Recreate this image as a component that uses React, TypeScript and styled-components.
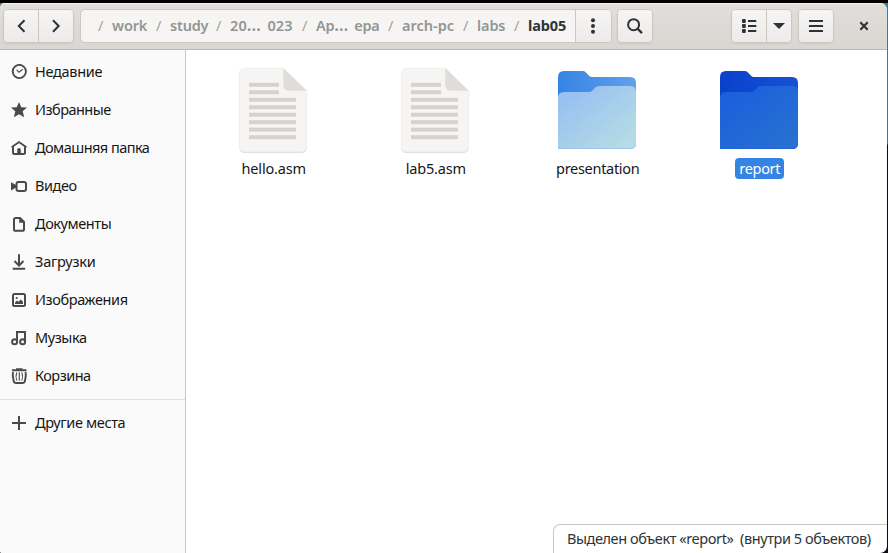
import React from "react";
import styled, { createGlobalStyle } from "styled-components";

const GlobalStyle = createGlobalStyle`
  * { box-sizing: border-box; }
  html, body { margin: 0; padding: 0; overflow: hidden; }
  body {
    font-family: "Noto Sans", "Open Sans", sans-serif;
    font-size: 14.5px;
    color: #171717;
    background: #000;
  }
  button { font: inherit; }
  svg { display: block; flex: none; }
`;

const Desktop = styled.div`
  width: 888px;
  height: 553px;
  background: linear-gradient(#4b7696 0, #4b7090 144px, #0c0d10 145px);
  overflow: hidden;
`;

const TopEdge = styled.div`
  height: 3px;
  background: #000;
`;

const Window = styled.div`
  width: 887px;
  height: 550px;
  display: flex;
  flex-direction: column;
  background: #fff;
  border-radius: 5px 7px 7px 2px;
  overflow: hidden;
`;

const Header = styled.header`
  height: 47px;
  flex: none;
  display: flex;
  align-items: flex-start;
  padding: 6px 0 0 3px;
  background: linear-gradient(#e1dedb, #dad6d2);
  border-bottom: 1px solid #bfb8b1;
  box-shadow: inset 0 1px #f4f2f1;
`;

const Group = styled.div<{ $gap: number }>`
  display: flex;
  height: 34px;
  flex: none;
  margin-right: ${(p) => p.$gap}px;
  border: 1px solid #cdc7c2;
  border-radius: 5px;
  background: linear-gradient(#f6f5f4, #edebe9);
  box-shadow: 0 1px 2px rgba(0, 0, 0, 0.07);
  overflow: hidden;
`;

const Button = styled.button<{ $w: number; $divided?: boolean }>`
  width: ${(p) => p.$w}px;
  height: 32px;
  flex: none;
  padding: 0;
  border: 0;
  border-left: ${(p) => (p.$divided ? "1px solid #cdc7c2" : "0")};
  background: linear-gradient(#f6f5f4, #edebe9);
  color: #2e3436;
  display: flex;
  align-items: center;
  justify-content: center;
`;

const PathBar = styled(Group)`
  width: 532px;
  background: #f6f5f4;
  box-shadow: none;
`;

const Crumbs = styled.nav`
  flex: 1;
  display: flex;
  padding-left: 17px;
  line-height: 30px;
  white-space: pre;
`;

const Crumb = styled.span<{ $w: number; $track: number; $current?: boolean }>`
  width: ${(p) => p.$w}px;
  flex: none;
  display: flex;
  letter-spacing: ${(p) => p.$track}px;
  word-spacing: 2.5px;
  font-weight: ${(p) => (p.$current ? 700 : 600)};
  color: ${(p) => (p.$current ? "#2e3436" : "#929595")};
`;

const Slash = styled.span`
  width: 14px;
  flex: none;
  font-weight: 400;
  color: #a0a2a2;
`;

const Dots = styled.span`
  font-size: 17px;
`;

const Spacer = styled.div`
  flex: 1;
`;

const Close = styled.button`
  width: 46px;
  height: 34px;
  padding: 0;
  border: 0;
  background: none;
  display: flex;
  align-items: center;
  justify-content: center;
  color: #2e3436;
`;

const Body = styled.div`
  flex: 1;
  min-height: 0;
  display: flex;
`;

const Sidebar = styled.aside`
  width: 186px;
  flex: none;
  padding-top: 3px;
  background: #fafafa;
  border-right: 1px solid #cbc7c3;
`;

const Place = styled.div`
  height: 38px;
  padding-left: 11px;
  display: flex;
  align-items: center;
  gap: 8px;
  color: #4a4a4a;
`;

const Label = styled.span<{ $track: number }>`
  padding-bottom: 2px;
  color: #171717;
  white-space: nowrap;
  letter-spacing: ${(p) => p.$track}px;
`;

const Rule = styled.div`
  height: 1px;
  margin: 4px 0;
  background: #dedede;
`;

const Main = styled.main`
  flex: 1;
  display: flex;
  flex-direction: column;
  justify-content: space-between;
`;

const Files = styled.div`
  display: flex;
  padding: 12px 0 0 6px;
`;

const File = styled.div`
  width: 162px;
  display: flex;
  flex-direction: column;
  align-items: center;
`;

const FileName = styled.div<{ $track: number; $selected?: boolean }>`
  height: 21px;
  margin-left: 1.500px;
  padding: 0 4px;
  border-radius: 4px;
  line-height: 21px;
  white-space: nowrap;
  letter-spacing: ${(p) => p.$track}px;
  color: ${(p) => (p.$selected ? "#fff" : "#171717")};
  background: ${(p) => (p.$selected ? "#3584e4" : "transparent")};
`;

const Status = styled.footer`
  align-self: flex-end;
  width: 334px;
  height: 29px;
  padding-left: 13px;
  border: 1px solid #cdc7c2;
  border-width: 1px 0 0 1px;
  border-radius: 7px 0 0 0;
  line-height: 27px;
  letter-spacing: -0.43px;
  color: #2e3436;
  white-space: pre;
`;

function Icon({ children }: { children: React.ReactNode }) {
  return (
    <svg width="16" height="16" viewBox="0 0 16 16" fill="none" stroke="currentColor" strokeWidth="2">
      {children}
    </svg>
  );
}

const solid = { fill: "currentColor", stroke: "none" };

const places = [
  {
    name: "Недавние",
    track: -0.3,
    icon: (
      <>
        <circle cx="8.3" cy="7.5" r="6.600" strokeWidth="1.9" />
        <path d="M5.6 5.8 8 8.2l3.7-3" strokeWidth="1.1" />
      </>
    ),
  },
  {
    name: "Избранные",
    track: -0.52,
    icon: <path {...solid} d="m8 0 2.3 5.2 5.7.4-4.3 3.7 1.5 6L8 12.2l-5.2 3.1 1.5-6L0 5.6l5.7-.4z" />,
  },
  {
    name: "Домашняя папка",
    track: -0.54,
    icon: (
      <>
        <path d="M.6 7.300 8 2l7.400 5.300" strokeWidth="1.800" />
        <path d="M2 6.800v5.700Q2 14 3.500 14h9Q14 14 14 12.500V6.800" />
        <path {...solid} d="M6.200 14V9.800Q6.200 8 8 8t1.800 1.800V14z" />
      </>
    ),
  },
  {
    name: "Видео",
    track: -0.45,
    icon: (
      <>
        <rect x="5.500" y="4" width="9.500" height="9" rx="2" />
        <path {...solid} d="M0 4.200v8.200l5-2.900V7z" />
      </>
    ),
  },
  {
    name: "Документы",
    track: -0.42,
    icon: (
      <>
        <path d="M4.700 2H9l4 4v7.200q0 1.600-1.600 1.600H4.600Q3 14.800 3 13.200V3.600Q3 2 4.700 2z" />
        <path {...solid} d="M8.200 1.500v5.300h5.300z" />
      </>
    ),
  },
  {
    name: "Загрузки",
    track: -0.22,
    icon: <path d="M8 .3v11.300M3.500 7 8 11.500 12.500 7M1.700 14.800h12.500" />,
  },
  {
    name: "Изображения",
    track: -0.38,
    icon: (
      <>
        <rect x="2" y="2" width="12" height="12" rx="1.500" />
        <path {...solid} d="M4 12v-1.500l2-2 1.400 1.200L10 7.500l2 2.500v2z" />
        <circle {...solid} cx="5.700" cy="6" r="1.100" />
      </>
    ),
  },
  {
    name: "Музыка",
    track: -0.42,
    icon: (
      <>
        <path d="M6 11.500V2h8v9.500" />
        <circle cx="3.600" cy="11.800" r="2.500" />
        <circle cx="11.600" cy="11.800" r="2.500" />
      </>
    ),
  },
  {
    name: "Корзина",
    track: -0.52,
    icon: (
      <>
        <path d="M1 2.200h14.500M5 1.200h6.500" strokeWidth="1.900" />
        <path d="M2.200 4.200Q1.500 6 2 9l.6 3.600Q3 15 5.200 15h6.200q2.200 0 2.600-2.400L14.600 9q.5-3-.2-4.800" strokeWidth="1.900" />
        <path d="M5.800 4.500q-1.700 4 0 8M8.300 4.300v8.400M10.800 4.500q1.700 4 0 8" strokeWidth="1.100" />
      </>
    ),
  },
];

const crumbs = [
  { w: 58, track: -0.15, text: "work" },
  { w: 60, track: -0.2, text: "study" },
  { w: 86, track: 0.1, text: "20", tail: " 023" },
  { w: 86, track: -0.25, text: "Ap", tail: " epa" },
  { w: 75, track: 0, text: "arch-pc" },
  { w: 51, track: -0.1, text: "labs" },
  { w: 55, track: -0.1, text: "lab05", current: true },
];

function DocumentIcon() {
  return (
    <svg width="96" height="96" viewBox="0 0 96 96">
      <path fill="#deddda" d="M20 6.800h38.300L81.700 29.500v55.400q0 6-6 6H20.300q-6 0-6-6V12.800q0-6 5.700-6z" />
      <path fill="#f6f5f4" stroke="#eeedeb" strokeWidth=".6" d="M20.300 6.200h38L81.700 29v54.800q0 6-6 6H20.300q-6 0-6-6V12.200q0-6 6-6z" />
      <path fill="#deddda" d="M58.300 6 81.700 28.800H64.300q-6 0-6-6z" />
      {[0, 1, 2, 3, 4, 5, 6, 7].map((i) => (
        <rect key={i} x="24" y={20.800 + i * 7.480} width={i < 2 ? 30 : 47} height="4" fill="#d5d3cf" />
      ))}
    </svg>
  );
}

function FolderIcon({ id, back, front, edge }: { id: string; back: string[]; front: string[]; edge: string }) {
  const frontShape = "M9 87V36q0-6 6-6h25q2 0 3.500-1.500l2.800-2.900Q47.900 24 50 24h31q6 0 6 6v51q0 6-6 6z";
  return (
    <svg width="96" height="96" viewBox="0 0 96 96">
      <defs>
        <linearGradient id={`${id}-back`}>
          <stop stopColor={back[0]} />
          <stop offset="1" stopColor={back[1]} />
        </linearGradient>
        <linearGradient id={`${id}-front`} x1="0" y1="0" x2="1" y2="1">
          <stop offset=".15" stopColor={front[0]} />
          <stop offset="1" stopColor={front[1]} />
        </linearGradient>
        <clipPath id={`${id}-clip`}>
          <path d={frontShape} />
        </clipPath>
      </defs>
      <path fill={`url(#${id}-back)`} d="M9 50V15q0-6 6-6h18.500q2 0 3.200 1.300l3.600 3.700q1 1 2.700 1h38q6 0 6 6v29z" />
      <path fill={`url(#${id}-front)`} d={frontShape} />
      <path clipPath={`url(#${id}-clip)`} fill="none" stroke={edge} strokeWidth="2" d="M9 87h72q6 0 6-6" />
    </svg>
  );
}

export default function App() {
  return (
    <Desktop>
      <GlobalStyle />
      <TopEdge />
      <Window>
        <Header>
          <Group $gap={6}>
            <Button $w={34}>
              <Icon><path d="M11.500 2.200 5.800 8l5.700 5.800" /></Icon>
            </Button>
            <Button $w={35} $divided>
              <Icon><path d="M5 2.200 10.700 8 5 13.800" /></Icon>
            </Button>
          </Group>
          <PathBar $gap={5}>
            <Crumbs>
              {crumbs.map((c) => (
                <Crumb key={c.text} $w={c.w} $track={c.track} $current={c.current}>
                  <Slash>/</Slash>
                  {c.text}
                  {c.tail && <Dots>…</Dots>}
                  {c.tail && <span>{c.tail}</span>}
                </Crumb>
              ))}
            </Crumbs>
            <Button $w={36} $divided>
              <Icon>
                <circle {...solid} cx="7" cy="2.300" r="2" />
                <circle {...solid} cx="7" cy="8" r="2" />
                <circle {...solid} cx="7" cy="13.700" r="2" />
              </Icon>
            </Button>
          </PathBar>
          <Group $gap={0}>
            <Button $w={34}>
              <Icon>
                <circle cx="6.600" cy="6.700" r="5.500" />
                <path d="m10.500 10.600 4.500 4.500" strokeWidth="2.300" />
              </Icon>
            </Button>
          </Group>
          <Spacer />
          <Group $gap={6}>
            <Button $w={34}>
              <Icon>
                <path d="M7 3h8.300M7 8h8.300M7 13h8.300" />
                <g {...solid}>
                  <rect x="1" y="1.100" width="3.800" height="3.800" rx="1" />
                  <rect x="1" y="6.100" width="3.800" height="3.800" rx="1" />
                  <rect x="1" y="11.100" width="3.800" height="3.800" rx="1" />
                </g>
              </Icon>
            </Button>
            <Button $w={25} $divided>
              <Icon><path {...solid} d="M2 5h12l-6 6z" /></Icon>
            </Button>
          </Group>
          <Group $gap={7}>
            <Button $w={34}>
              <Icon><path d="M1 3h14M1 8h14M1 13h14" /></Icon>
            </Button>
          </Group>
          <Close>
            <Icon><path d="m4.300 4.300 7.400 7.400m0-7.400-7.400 7.400" strokeWidth="2.200" /></Icon>
          </Close>
        </Header>
        <Body>
          <Sidebar>
            {places.map((p) => (
              <Place key={p.name}>
                <Icon>{p.icon}</Icon>
                <Label $track={p.track}>{p.name}</Label>
              </Place>
            ))}
            <Rule />
            <Place>
              <Icon><path d="M8 1v14M1 8h14" /></Icon>
              <Label $track={-0.35}>Другие места</Label>
            </Place>
          </Sidebar>
          <Main>
            <Files>
              <File>
                <DocumentIcon />
                <FileName $track={-0.15}>hello.asm</FileName>
              </File>
              <File>
                <DocumentIcon />
                <FileName $track={-0.2}>lab5.asm</FileName>
              </File>
              <File>
                <FolderIcon id="presentation" back={["#3584e4", "#62a0ea"]} front={["#99c1f1", "#b9dfe3"]} edge="#a0c5f0" />
                <FileName $track={-0.3}>presentation</FileName>
              </File>
              <File>
                <FolderIcon id="report" back={["#0a41cb", "#1752d6"]} front={["#1c60dc", "#2873cf"]} edge="#1f62d8" />
                <FileName $track={-0.3} $selected>report</FileName>
              </File>
            </Files>
            <Status>Выделен объект «report»  (внутри 5 объектов)</Status>
          </Main>
        </Body>
      </Window>
    </Desktop>
  );
}
